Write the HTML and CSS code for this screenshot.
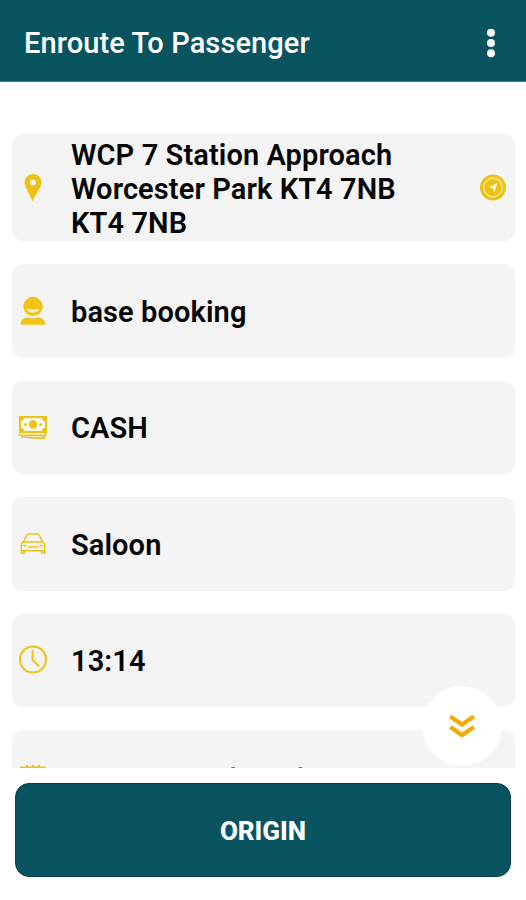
FILE: index.html
```html
<!DOCTYPE html>
<html lang="en">
<head>
<meta charset="utf-8">
<title>Enroute To Passenger</title>
<link rel="stylesheet" href="styles.css">
</head>
<body>
<header class="bar">
  <h1>Enroute To Passenger</h1>
  <svg class="more" width="10" height="30" viewBox="0 0 10 30" fill="#fff"><circle cx="5" cy="4.7" r="4"/><circle cx="5" cy="15" r="4"/><circle cx="5" cy="25.3" r="4"/></svg>
</header>
<main class="list">
  <section class="card address">
    <svg class="icon" viewBox="0 0 30 30"><path fill="#edc215" fill-rule="evenodd" d="M15 .9a8.5 8.500 0 0 0-8.500 8.500c0 5.500 5.200 10.500 8 19 3.200-8.500 9-13.500 9-19A8.500 8.500 0 0 0 15 .9zm0 5.600a2.900 2.900 0 1 1 0 5.800 2.900 2.900 0 0 1 0-5.800z"/></svg>
    <p>WCP 7 Station Approach Worcester Park KT4 7NB KT4 7NB</p>
    <svg class="nav" viewBox="0 0 28 28"><circle cx="14" cy="13.500" r="13" fill="#edc215"/><circle cx="14" cy="13.500" r="9.300" fill="none" stroke="#f8e88f" stroke-width="1.300"/><path fill="#fff" d="M18.300 9.200 10 13.300l4 1 1.200 4z"/></svg>
  </section>
  <section class="card">
    <svg class="icon" viewBox="0 0 30 30"><circle cx="15" cy="10.500" r="9.700" fill="#efc416"/><path fill="#fff8dc" d="M9 12.700q6 2 12 0c-1 5.200-11 5.200-12 0z"/><path fill="#efc416" d="M2.500 28.800c.3-5.400 4-7.400 8-7.600 3 1.700 6 1.700 9 0 4 .2 7.700 2.200 8 7.600z"/></svg>
    <p>base booking</p>
  </section>
  <section class="card">
    <svg class="icon" viewBox="0 0 30 30"><path fill="#edc215" d="M1 4h28v17H1z"/><path fill="#fffbea" d="M6 6h18q0 3 3 3v7q-3 0-3 3H6q0-3-3-3V9q3 0 3-3z"/><g fill="#edc215"><circle cx="15" cy="12.500" r="4.200"/><circle cx="7.500" cy="12.500" r="1.500"/><circle cx="22.500" cy="12.500" r="1.500"/></g><path d="M1.500 21.500v1.500l26 .7V21M3 25l23 1.300v-2" fill="none" stroke="#edc215" stroke-width="1.700"/></svg>
    <p>CASH</p>
  </section>
  <section class="card">
    <svg class="icon" viewBox="0 0 30 30" fill="none" stroke="#edc215" stroke-width="1.500" stroke-linejoin="round" stroke-linecap="round"><path d="M5.500 13 8.500 6.500Q9.200 5 10.800 5h8.400q1.600 0 2.300 1.500l3 6.500M3.300 21.700V16q0-3 3-3h17.400q3 0 3 3v5.700zM3.300 21.700v2.500h3v-2.500M23.700 21.700v2.500h3v-2.500M10.500 18h9M6 16.300l2 .7M24 16.300l-2 .7"/></svg>
    <p>Saloon</p>
  </section>
  <section class="card">
    <svg class="icon" viewBox="0 0 30 30" fill="none" stroke="#edc215" stroke-width="2" stroke-linecap="round"><circle cx="15" cy="14.500" r="13"/><path d="M14.600 6v9l6 5.700"/></svg>
    <p>13:14</p>
  </section>
  <section class="card">
    <svg class="icon" viewBox="0 0 30 30" fill="none" stroke="#edc215" stroke-width="1.800"><path d="M3 5.500h24V27H3zM3 12h24M9 3v5M15 3v5M21 3v5"/></svg>
    <p class="muted">seven seats board</p>
  </section>
  <button class="down" aria-label="Scroll down"><svg width="28" height="26" viewBox="0 0 28 26" fill="none" stroke="#f0ad08" stroke-width="4.400"><path d="m2.200 3.500 11.800 8 11.800-8M2.200 14 14 22l11.800-8"/></svg></button>
</main>
<button class="origin">ORIGIN</button>
</body>
</html>
```
FILE: styles.css
```css
* { box-sizing: border-box; }
body { margin: 0; width: 526px; height: 900px; overflow: hidden; background: #fff; font-family: Roboto, sans-serif; color: #050505; }
.bar { height: 82px; padding: 4px 30px 0 24px; display: flex; align-items: center; justify-content: space-between; background: #075460; color: #fff; border-bottom: 1px solid #467f88; }
.bar h1 { margin: 0; font-size: 29px; font-weight: 500; line-height: 34px; letter-spacing: .1px; }
.bar .more { display: block; }
.list { position: relative; height: 686px; padding: 52px 11px 0 12px; display: flex; flex-direction: column; gap: 23px; overflow: hidden; }
.card { flex: none; height: 93.500px; padding: 0 8px 0 6px; display: flex; align-items: center; border-radius: 11px; background: #f4f4f4; }
.card.address { height: 107px; }
.icon { flex: none; width: 30px; height: 30px; margin-right: 23px; }
.card p { flex: none; width: 350px; margin: 2px 0 0; font-size: 29px; line-height: 34px; font-weight: 600; letter-spacing: .1px; }
.address .nav { width: 28px; height: 28px; margin-left: auto; }
.card .muted { margin-top: 5px; color: #777; font-weight: 500; letter-spacing: -.2px; }
.down { position: absolute; right: 24px; bottom: 2px; width: 80px; height: 80px; padding: 0; border: 0; border-radius: 50%; display: flex; align-items: center; justify-content: center; background: #fff; }
.origin { display: block; width: 496px; height: 94px; margin: 15px 0 0 15px; padding: 2px 0 0; border: 1px solid #063f4b; border-radius: 14px; background: #075460; color: #fff; font: 800 26px Roboto, sans-serif; }
```
